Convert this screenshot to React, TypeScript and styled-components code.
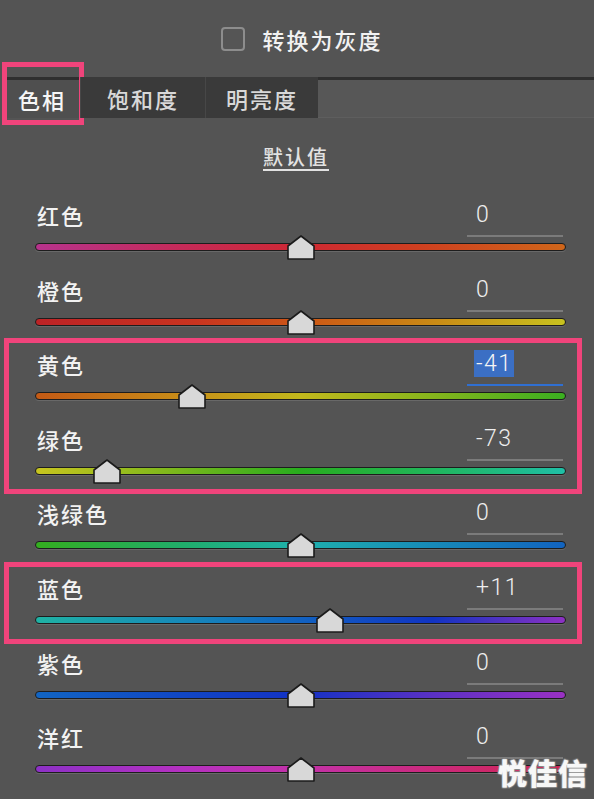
import React from "react";
import styled, { createGlobalStyle, css } from "styled-components";

const GlobalStyle = createGlobalStyle`
  html, body {
    margin: 0;
    padding: 0;
    background: #545454;
  }
  body {
    font-family: "Noto Sans CJK SC", "Noto Sans", sans-serif;
  }
`;

const PINK = "#f0447b";

const Panel = styled.div`
  position: relative;
  width: 594px;
  height: 799px;
  overflow: hidden;
  background: #545454;
  color: #f2f2f2;
  display: flex;
  flex-direction: column;
`;

/* ---------- top: grayscale toggle ---------- */

const Header = styled.div`
  height: 77px;
  display: flex;
  align-items: center;
  justify-content: center;
  gap: 17px;
  padding-left: 10px;
  box-sizing: border-box;
`;

const CheckBox = styled.span`
  width: 24px;
  height: 24px;
  box-sizing: border-box;
  border: 2px solid #8d8d8d;
  border-radius: 4px;
  background: #555555;
`;

const HeaderText = styled.span`
  font-size: 22px;
  font-weight: 500;
  letter-spacing: 2px;
  line-height: 30px;
`;

/* ---------- tabs ---------- */

const TabBar = styled.div`
  height: 41px;
  display: flex;
  padding-left: 4px;
`;

const Tab = styled.div<{ $active?: boolean; $pad: number; $marked?: boolean }>`
  position: relative;
  display: flex;
  align-items: center;
  padding: 0 ${(p) => p.$pad}px;
  font-size: 22px;
  font-weight: 500;
  letter-spacing: 2px;
  box-sizing: border-box;
  ${(p) =>
    p.$active
      ? css`
          background: #4f4f4f;
          border-top: 3px solid #2f2f2f;
          color: #f6f6f6;
        `
      : css`
          background: #3a3a3a;
          border-left: 1px solid #474747;
          color: #d8d8d8;
        `}
  ${(p) =>
    p.$marked &&
    css`
      &::after {
        content: "";
        position: absolute;
        left: -2px;
        right: -4px;
        top: -18px;
        bottom: -7px;
        border: 5px solid ${PINK};
        pointer-events: none;
      }
    `}
`;

const TabFill = styled.div`
  flex: 1;
  background: #575757;
  border-top: 3px solid #2f2f2f;
  border-bottom: 1px solid #5e5e5e;
  box-sizing: border-box;
`;

/* ---------- defaults link ---------- */

const DefaultsRow = styled.div`
  height: 77px;
  display: flex;
  align-items: center;
  justify-content: center;
`;

const DefaultsLink = styled.span`
  font-size: 20px;
  font-weight: 500;
  letter-spacing: 2px;
  color: #e2e2e2;
  text-decoration: underline;
  text-underline-offset: 4px;
  margin-right: 2px;
`;

/* ---------- sliders ---------- */

const Group = styled.div<{ $marked?: boolean }>`
  position: relative;
  ${(p) =>
    p.$marked &&
    css`
      &::before {
        content: "";
        position: absolute;
        left: 4px;
        right: 12px;
        top: -6px;
        bottom: -1px;
        border: 5px solid ${PINK};
        pointer-events: none;
      }
    `}
`;

const Row = styled.div`
  height: 74.6px;
  padding: 0 28px 0 35px;
  box-sizing: border-box;
`;

const RowHead = styled.div`
  height: 42px;
  display: flex;
  justify-content: space-between;
`;

const Label = styled.span`
  padding-left: 2px;
  font-size: 22px;
  font-weight: 500;
  letter-spacing: 2px;
  line-height: 40px;
  color: #f2f2f2;
`;

const ValueBox = styled.div<{ $focused?: boolean }>`
  width: 96px;
  margin-right: 3px;
  padding-left: 9px;
  box-sizing: border-box;
  border-bottom: 2px solid ${(p) => (p.$focused ? "#2f6fd2" : "#7b7b7b")};
  font-family: "Roboto", "Liberation Sans", sans-serif;
  font-weight: 300;
  font-size: 23px;
  letter-spacing: 1.5px;
  line-height: 40px;
  color: #eeeeee;
`;

const Selected = styled.span`
  display: inline-block;
  margin-left: -2px;
  padding: 0 1px 0 2px;
  line-height: 27px;
  background: #3b6fc4;
  color: #f4f4f4;
`;

const Track = styled.div<{ $grad: string }>`
  position: relative;
  margin-top: 6px;
  height: 8px;
  box-sizing: border-box;
  border: 1.5px solid #1d1d1d;
  border-radius: 4px;
  background: linear-gradient(to right, ${(p) => p.$grad});
  box-shadow: 0 1px 0 rgba(255, 255, 255, 0.12);
`;

const Thumb = styled.svg`
  position: absolute;
  top: -9px;
  width: 28px;
  height: 25px;
  margin-left: -14px;
`;

/* ---------- watermark ---------- */

const Watermark = styled.div`
  position: absolute;
  right: 6px;
  bottom: 6px;
  font-size: 29px;
  font-weight: 900;
  letter-spacing: 1px;
  color: #f7f7f7;
  -webkit-text-stroke: 2px #6a6a6a;
  paint-order: stroke fill;
  text-shadow: 0 0 2px #bdbdbd, 0 0 1px #bdbdbd;
`;

interface IHue {
  label: string;
  value: number;
  grad: string;
  focused?: boolean;
}

const groups: { marked?: boolean; rows: IHue[] }[] = [
  {
    rows: [
      { label: "红色", value: 0, grad: "#b7338d, #c62a58 28%, #cf2833 50%, #cf3f20 72%, #d0661a" },
      { label: "橙色", value: 0, grad: "#bd2326, #c93420 30%, #cd5a16 52%, #c98c16 76%, #c8c21f" },
    ],
  },
  {
    marked: true,
    rows: [
      { label: "黄色", value: -41, focused: true, grad: "#c45a15, #c88e18 28%, #c2b81c 50%, #86b51c 75%, #3aaf20" },
      { label: "绿色", value: -73, grad: "#c8c51f, #7fb81c 25%, #28ad1e 50%, #20b65c 75%, #1fbfa6" },
    ],
  },
  {
    rows: [
      { label: "浅绿色", value: 0, grad: "#34ae1f, #20ae6c 28%, #1fb0ad 50%, #178ab8 75%, #1263bf" },
    ],
  },
  {
    marked: true,
    rows: [
      { label: "蓝色", value: 11, grad: "#1fb2a4, #1789b9 28%, #1262c1 50%, #1134c2 75%, #8d31c3" },
    ],
  },
  {
    rows: [
      { label: "紫色", value: 0, grad: "#1265c3, #1146c4 28%, #1432c4 50%, #5a31c4 75%, #9a31c3" },
      { label: "洋红", value: 0, grad: "#8d31c6, #b531c0 28%, #c332a8 50%, #cb2a7c 75%, #cf2552" },
    ],
  },
];

const formatValue = (v: number) => (v > 0 ? `+${v}` : `${v}`);

const HueRow: React.FC<{ hue: IHue }> = ({ hue }) => {
  const pct = ((hue.value + 100) / 200) * 100;
  const text = formatValue(hue.value);
  return (
    <Row>
      <RowHead>
        <Label>{hue.label}</Label>
        <ValueBox $focused={hue.focused}>
          {hue.focused ? <Selected>{text}</Selected> : text}
        </ValueBox>
      </RowHead>
      <Track $grad={hue.grad}>
        <Thumb viewBox="0 0 28 25" style={{ left: `${pct}%` }}>
          <path
            d="M1 11 L14 1 L27 11 L27 24 L1 24 Z"
            fill="#d8d8d8"
            stroke="#1b1b1b"
            strokeWidth="1.6"
            strokeLinejoin="round"
          />
        </Thumb>
      </Track>
    </Row>
  );
};

export default function App() {
  return (
    <>
      <GlobalStyle />
      <Panel>
        <Header>
          <CheckBox />
          <HeaderText>转换为灰度</HeaderText>
        </Header>
        <TabBar>
          <Tab $active $marked $pad={14}>色相</Tab>
          <Tab $pad={26}>饱和度</Tab>
          <Tab $pad={20}>明亮度</Tab>
          <TabFill />
        </TabBar>
        <DefaultsRow>
          <DefaultsLink>默认值</DefaultsLink>
        </DefaultsRow>
        {groups.map((g, i) => (
          <Group key={i} $marked={g.marked}>
            {g.rows.map((h) => (
              <HueRow key={h.label} hue={h} />
            ))}
          </Group>
        ))}
        <Watermark>悦佳信</Watermark>
      </Panel>
    </>
  );
}
